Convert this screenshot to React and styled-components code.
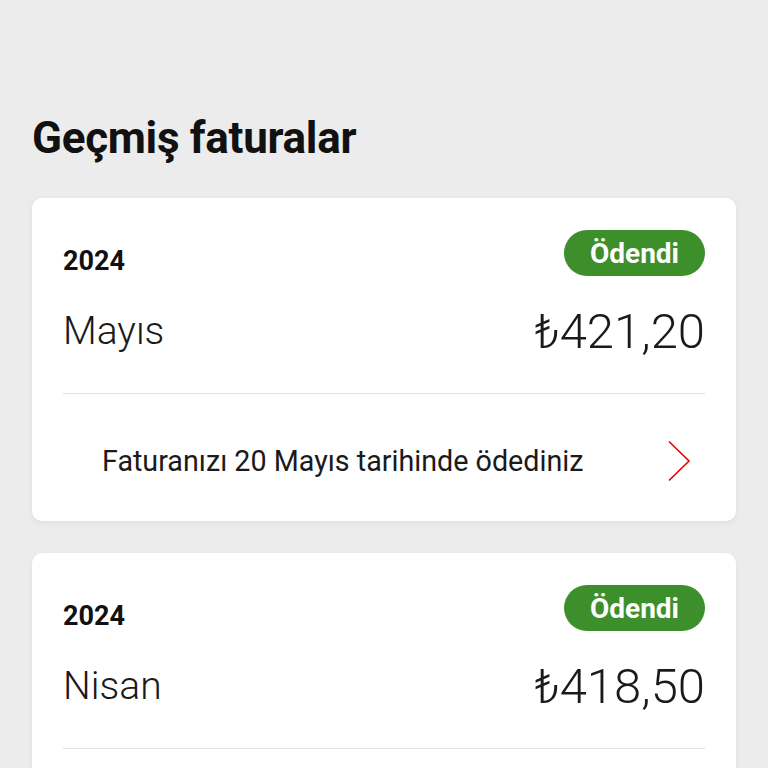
import React from 'react'
import styled, { createGlobalStyle } from 'styled-components'

const GlobalStyle = createGlobalStyle`
  html, body {
    margin: 0;
    padding: 0;
    background: #ececec;
  }
  body {
    font-family: Roboto, "Noto Sans", sans-serif;
    color: #1a1a1a;
  }
`

const bills = [
  { year: '2024', month: 'Mayıs', amount: '421,20', note: 'Faturanızı 20 Mayıs tarihinde ödediniz' },
  { year: '2024', month: 'Nisan', amount: '418,50', note: 'Faturanızı 20 Nisan tarihinde ödediniz' },
]

function Chevron() {
  return (
    <svg width="24" height="42" viewBox="0 0 24 42" fill="none">
      <path d="M2 1.5 L22 21 L2 40.5" stroke="#e60000" strokeWidth="1.6" />
    </svg>
  )
}

function BillCard({ bill }) {
  return (
    <Card>
      <TopRow>
        <Year>{bill.year}</Year>
        <Badge>Ödendi</Badge>
      </TopRow>
      <MainRow>
        <Month>{bill.month}</Month>
        <Amount>₺{bill.amount}</Amount>
      </MainRow>
      <Divider />
      <Footer>
        <Note>{bill.note}</Note>
        <Chevron />
      </Footer>
    </Card>
  )
}

export default function App() {
  return (
    <Page>
      <GlobalStyle />
      <Title>Geçmiş faturalar</Title>
      <List>
        {bills.map(b => (
          <BillCard key={b.month} bill={b} />
        ))}
      </List>
    </Page>
  )
}

const Page = styled.div`
  padding: 114px 32px 0;
  height: 768px;
  box-sizing: border-box;
  overflow: hidden;
`

const Title = styled.h1`
  margin: 0 0 36px;
  font-size: 44px;
  line-height: 48px;
  font-weight: 700;
  letter-spacing: -0.3px;
  color: #111;
`

const List = styled.div`
  display: flex;
  flex-direction: column;
  gap: 32px;
`

const Card = styled.div`
  background: #fff;
  border-radius: 10px;
  padding: 32px 31px 0;
  box-shadow: 0 2px 6px rgba(0, 0, 0, 0.06);
`

const TopRow = styled.div`
  display: flex;
  justify-content: space-between;
  align-items: flex-end;
  height: 46px;
`

const Year = styled.div`
  font-size: 27px;
  font-weight: 700;
  line-height: 30px;
  color: #111;
`

const Badge = styled.div`
  height: 46px;
  padding: 0 26px;
  border-radius: 23px;
  background: #3d8f2b;
  color: #fff;
  font-size: 28px;
  font-weight: 700;
  display: flex;
  align-items: center;
  box-sizing: border-box;
`

const MainRow = styled.div`
  display: flex;
  justify-content: space-between;
  align-items: center;
  margin-top: 33px;
  height: 44px;
`

const Month = styled.div`
  font-size: 39px;
  font-weight: 300;
  color: #1a1a1a;
`

const Amount = styled.div`
  font-size: 49px;
  font-weight: 300;
  color: #1a1a1a;
`

const Divider = styled.div`
  height: 1px;
  background: #e2e2e2;
  margin-top: 40px;
`

const Footer = styled.div`
  height: 127px;
  display: flex;
  align-items: center;
  justify-content: space-between;
  padding: 6px 14px 0 39px;
  box-sizing: border-box;
`

const Note = styled.div`
  font-size: 28.7px;
  font-weight: 400;
  color: #1a1a1a;
`
